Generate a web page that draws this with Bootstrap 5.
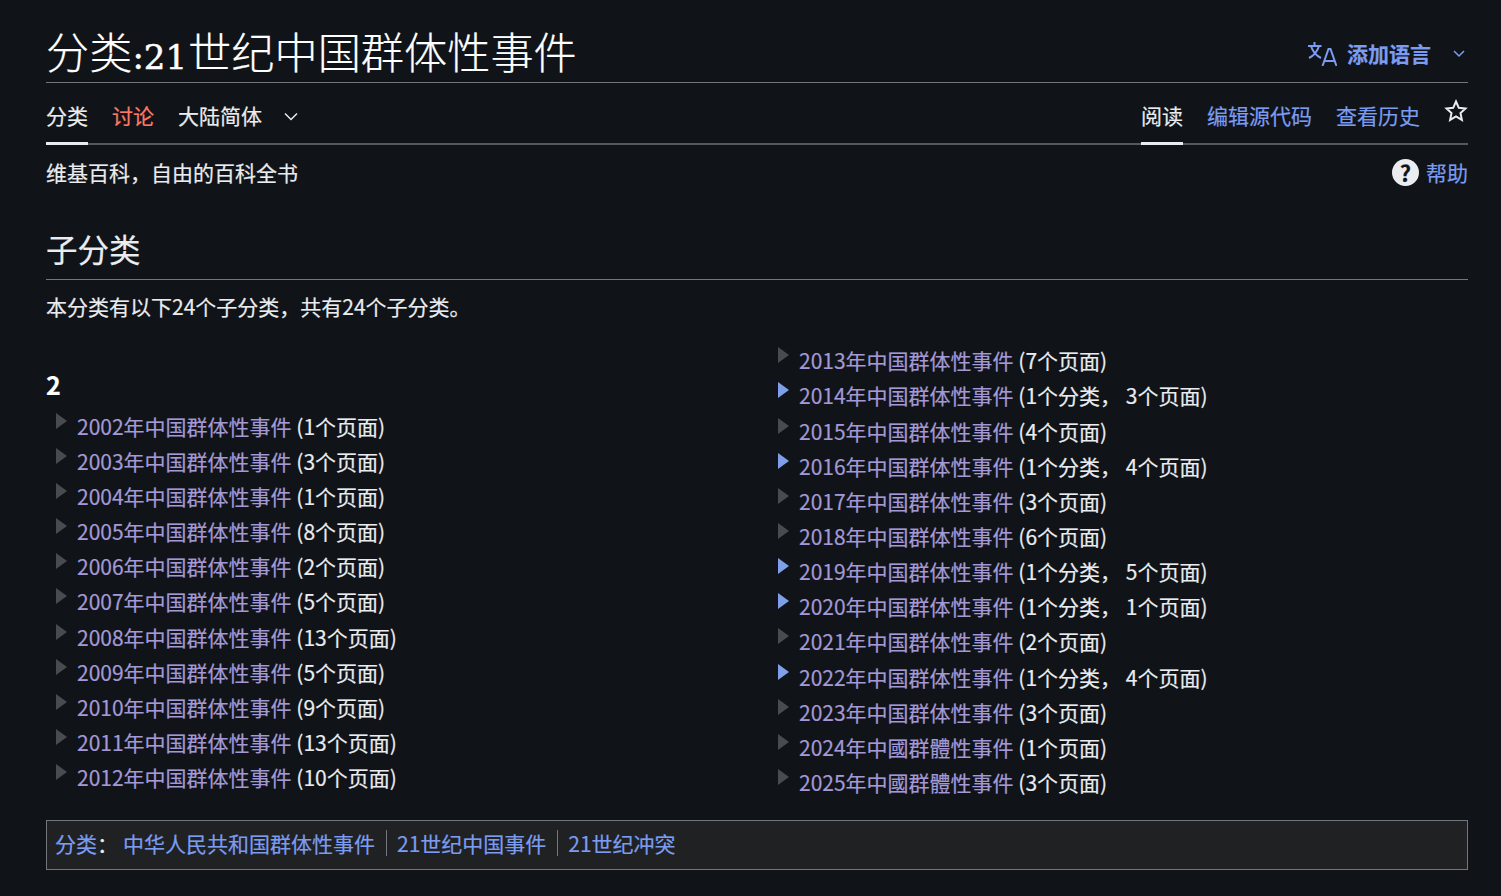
<!DOCTYPE html>
<html lang="zh-CN">
<head>
<meta charset="utf-8">
<title>分类:21世纪中国群体性事件</title>
<link href="https://cdn.jsdelivr.net/npm/bootstrap@5.3.0/dist/css/bootstrap.min.css" rel="stylesheet">
<style>
html,body{background:#101418;}
body{font-family:"Noto Sans CJK SC","Noto Sans",sans-serif;font-size:21px;line-height:33.6px;color:#eaecf0;height:896px;overflow:hidden;-webkit-text-stroke:0.2px;}
a{text-decoration:none;color:#7b9cf0;}
.wrap{padding:0 33px 0 46px;}
.head-row{height:83px;border-bottom:1px solid #72777d;}
.page-title{font-family:"Liberation Serif","Noto Sans CJK SC",serif;font-size:43.2px;line-height:58px;margin:26px 0 0;color:#fff;font-weight:300;}
.title-num{font-family:"DejaVu Serif",serif;font-size:34px;font-weight:400;margin:0 1px 0 0;-webkit-text-stroke:0.5px;}
.lang{margin-top:36px;color:#7b9cf0;font-weight:700;font-size:21px;line-height:34px;}
.lang-icon{margin-right:10px;margin-top:2px;}
.lang-chev{margin-left:22px;margin-right:3px;margin-top:2px;}
.tabs{height:62px;border-bottom:2px solid #54595d;}
.tabitem{height:62px;padding-top:15px;line-height:34px;border-bottom:3px solid transparent;}
.tabitem.on{border-bottom-color:#eaecf0;}
.tabitem.red{color:#fd7865;}
.tab-chev{margin-left:22px;margin-top:14px;}
.star-box{padding-top:16px;}
.tagline{margin-top:10px;line-height:34px;}
.help{gap:7px;}
.qmark{width:27px;height:27px;border-radius:50%;background:#eaecf0;color:#101418;font-weight:700;font-size:22px;line-height:27px;text-align:center;margin-top:1px;}
.sub-h{font-size:31.5px;line-height:46px;margin:36px 0 0;padding-bottom:8px;border-bottom:1px solid #72777d;font-weight:400;color:#eaecf0;}
.intro{margin:9px 0 0;line-height:34px;}
.cols{display:grid;grid-template-columns:722px 1fr;margin-top:20.3px;}
.letter{font-size:25px;font-weight:700;line-height:34px;margin:24px 0 7.4px;color:#fff;}
.cat{height:35.15px;line-height:35.15px;padding-left:31px;position:relative;white-space:nowrap;}
.tri{position:absolute;left:10px;top:4px;width:0;height:0;border-style:solid;border-width:8.5px 0 8.5px 11px;border-color:transparent transparent transparent #484b50;}
.tri.more{border-left-color:#7f9fe8;}
.cat a{color:#a499d6;}
.catlinks{margin-top:19.7px;height:50px;background:#202122;border:1px solid #72777d;padding:0 8px 4px;line-height:48px;}
.catlinks .sep{height:26px;border-left:1px solid #72777d;margin:0 10.5px;}
.gray{color:#eaecf0;margin-right:5px;}
</style>
</head>
<body>
<div class="wrap">
  <div class="head-row d-flex justify-content-between align-items-start">
    <h1 class="page-title">分类<span class="title-num">:21</span>世纪中国群体性事件</h1>
    <div class="lang d-flex align-items-center">
      <svg class="lang-icon" width="29" height="24" viewBox="0 0 29 24" fill="none" stroke="#7b9cf0" stroke-width="2"><path d="M6.500 0v3.500M0 4h13.500M11 4C9.500 9 6 13.500 1 16M3 4c1.500 5 5 9.500 10 12"/><path d="M14.500 24l6-17h2l6 17M16.500 19h10"/></svg>
      <span>添加语言</span>
      <svg class="lang-chev" width="12" height="8" viewBox="0 0 12 8" fill="none" stroke="#7b9cf0" stroke-width="1.500"><path d="M1 1l5 5 5-5"/></svg>
    </div>
  </div>
  <div class="tabs d-flex justify-content-between">
    <div class="d-flex gap-4">
      <div class="tabitem on">分类</div>
      <div class="tabitem red">讨论</div>
      <div class="tabitem d-flex align-items-start">大陆简体
        <svg class="tab-chev" width="14" height="9" viewBox="0 0 14 9" fill="none" stroke="#eaecf0" stroke-width="1.500"><path d="M1 1.500l6 6 6-6"/></svg>
      </div>
    </div>
    <div class="d-flex gap-4">
      <div class="tabitem on">阅读</div>
      <div class="tabitem"><a href="#">编辑源代码</a></div>
      <div class="tabitem"><a href="#">查看历史</a></div>
      <div class="star-box">
        <svg class="d-block" width="24" height="24" viewBox="0 0 24 24" fill="none" stroke="#eaecf0" stroke-width="2"><path d="M12 2.500l2.800 6.300 6.700.7-5 4.600 1.400 6.800-5.900-3.500-5.900 3.500 1.400-6.800-5-4.600 6.700-.7z"/></svg>
      </div>
    </div>
  </div>
  <div class="d-flex justify-content-between">
    <div class="tagline">维基百科，自由的百科全书</div>
    <div class="help tagline d-flex align-items-center"><span class="qmark">?</span><a href="#">帮助</a></div>
  </div>
  <h2 class="sub-h">子分类</h2>
  <p class="intro">本分类有以下24个子分类，共有24个子分类。</p>
  <div class="cols">
    <div>
      <div class="letter">2</div>
      <div class="cat"><i class="tri"></i><a href="#">2002年中国群体性事件</a> (1个页面)</div>
      <div class="cat"><i class="tri"></i><a href="#">2003年中国群体性事件</a> (3个页面)</div>
      <div class="cat"><i class="tri"></i><a href="#">2004年中国群体性事件</a> (1个页面)</div>
      <div class="cat"><i class="tri"></i><a href="#">2005年中国群体性事件</a> (8个页面)</div>
      <div class="cat"><i class="tri"></i><a href="#">2006年中国群体性事件</a> (2个页面)</div>
      <div class="cat"><i class="tri"></i><a href="#">2007年中国群体性事件</a> (5个页面)</div>
      <div class="cat"><i class="tri"></i><a href="#">2008年中国群体性事件</a> (13个页面)</div>
      <div class="cat"><i class="tri"></i><a href="#">2009年中国群体性事件</a> (5个页面)</div>
      <div class="cat"><i class="tri"></i><a href="#">2010年中国群体性事件</a> (9个页面)</div>
      <div class="cat"><i class="tri"></i><a href="#">2011年中国群体性事件</a> (13个页面)</div>
      <div class="cat"><i class="tri"></i><a href="#">2012年中国群体性事件</a> (10个页面)</div>
    </div>
    <div>
      <div class="cat"><i class="tri"></i><a href="#">2013年中国群体性事件</a> (7个页面)</div>
      <div class="cat"><i class="tri more"></i><a href="#">2014年中国群体性事件</a> (1个分类， 3个页面)</div>
      <div class="cat"><i class="tri"></i><a href="#">2015年中国群体性事件</a> (4个页面)</div>
      <div class="cat"><i class="tri more"></i><a href="#">2016年中国群体性事件</a> (1个分类， 4个页面)</div>
      <div class="cat"><i class="tri"></i><a href="#">2017年中国群体性事件</a> (3个页面)</div>
      <div class="cat"><i class="tri"></i><a href="#">2018年中国群体性事件</a> (6个页面)</div>
      <div class="cat"><i class="tri more"></i><a href="#">2019年中国群体性事件</a> (1个分类， 5个页面)</div>
      <div class="cat"><i class="tri more"></i><a href="#">2020年中国群体性事件</a> (1个分类， 1个页面)</div>
      <div class="cat"><i class="tri"></i><a href="#">2021年中国群体性事件</a> (2个页面)</div>
      <div class="cat"><i class="tri more"></i><a href="#">2022年中国群体性事件</a> (1个分类， 4个页面)</div>
      <div class="cat"><i class="tri"></i><a href="#">2023年中国群体性事件</a> (3个页面)</div>
      <div class="cat"><i class="tri"></i><a href="#">2024年中國群體性事件</a> (1个页面)</div>
      <div class="cat"><i class="tri"></i><a href="#">2025年中國群體性事件</a> (3个页面)</div>
    </div>
  </div>
  <div class="catlinks d-flex align-items-center">
    <a href="#">分类</a><span class="gray">：</span><a href="#">中华人民共和国群体性事件</a><span class="sep"></span><a href="#">21世纪中国事件</a><span class="sep"></span><a href="#">21世纪冲突</a>
  </div>
</div>
<script src="https://cdn.jsdelivr.net/npm/bootstrap@5.3.0/dist/js/bootstrap.bundle.min.js"></script>
</body>
</html>
